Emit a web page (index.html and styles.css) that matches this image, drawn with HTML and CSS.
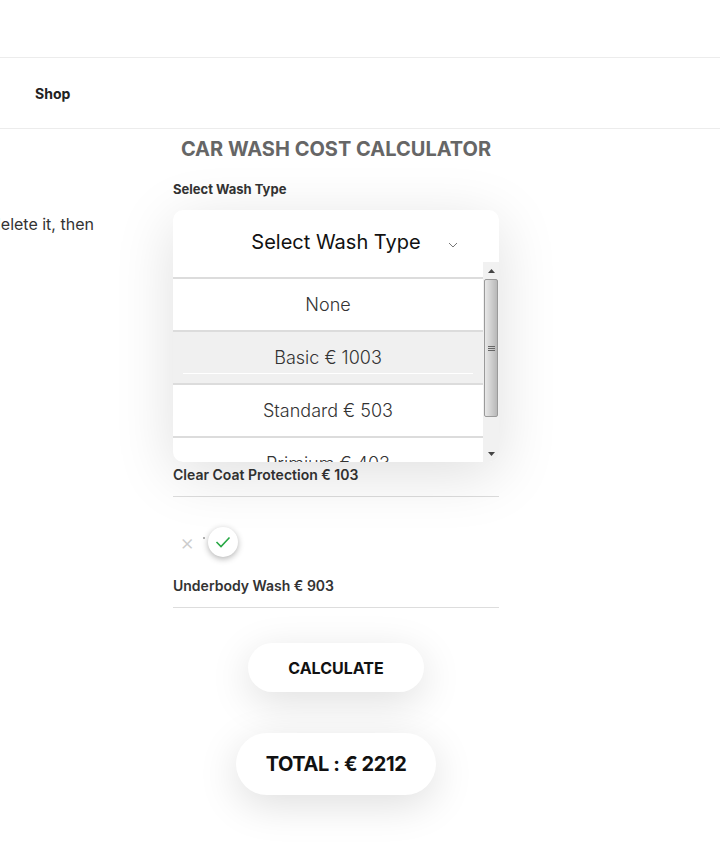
FILE: index.html
```html
<!DOCTYPE html>
<html>
<head>
<meta charset="utf-8">
<link rel="stylesheet" href="styles.css">
</head>
<body>
<div class="topbar"></div>
<nav class="nav"><a class="nav-link">Shop</a></nav>
<div class="main">
  <aside class="side">
    <p class="side-text">delete it, then</p>
  </aside>
  <section class="calc">
    <h1 class="title">CAR WASH COST CALCULATOR</h1>
    <div class="field-label">Select Wash Type</div>
    <div class="dropdown">
      <div class="dd-head">
        <span class="dd-value">Select Wash Type</span>
        <svg class="chev" width="10" height="6" viewBox="0 0 10 6"><polyline points="1,1 5,5 9,1" fill="none" stroke="#777" stroke-width="1"/></svg>
      </div>
      <div class="dd-list">
        <div class="dd-options">
          <div class="opt-partial"></div>
          <div class="opt">None</div>
          <div class="opt opt-hover">Basic € 1003</div>
          <div class="opt">Standard € 503</div>
          <div class="opt">Primium € 403</div>
        </div>
        <div class="scrollbar">
          <div class="sb-btn"><svg width="7" height="4" viewBox="0 0 7 4"><polygon points="0,4 3.5,0 7,4" fill="#444"/></svg></div>
          <div class="sb-thumb"><div class="grip"></div><div class="grip"></div><div class="grip"></div></div>
          <div class="sb-track"></div>
          <div class="sb-btn"><svg width="7" height="4" viewBox="0 0 7 4"><polygon points="0,0 7,0 3.5,4" fill="#444"/></svg></div>
        </div>
      </div>
    </div>
    <div class="addon addon-first">Clear Coat Protection € 103</div>
    <div class="toggle">
      <span class="t-x">×</span>
      <span class="t-dot"></span>
      <span class="knob"><svg width="16" height="12" viewBox="0 0 16 12"><polyline points="1.5,6 6,10.5 14.5,1.5" fill="none" stroke="#27a844" stroke-width="1.6"/></svg></span>
    </div>
    <div class="addon">Underbody Wash € 903</div>
    <div class="actions">
      <button class="btn">CALCULATE</button>
      <div class="total">TOTAL : € 2212</div>
    </div>
  </section>
</div>
</body>
</html>
```
FILE: styles.css
```css
* { box-sizing: border-box; }
html, body { margin: 0; padding: 0; background: #fff; }
body {
  font-family: Inter, Roboto, "Liberation Sans", sans-serif;
  color: #222;
  width: 720px;
  height: 860px;
  overflow: hidden;
}
.topbar {
  height: 58px;
  border-bottom: 1px solid #ececec;
}
.nav {
  height: 71px;
  border-bottom: 1px solid #ececec;
  display: flex;
  align-items: center;
  padding-left: 35px;
}
.nav-link {
  font-size: 14px;
  font-weight: 700;
  color: #222;
}
.main {
  display: flex;
}
.side {
  width: 173px;
  flex: none;
}
.side-text {
  margin: 85px 0 0 -9px;
  font-size: 16px;
  color: #333;
  white-space: nowrap;
}
.calc {
  width: 326px;
  flex: none;
}
.title {
  margin: 8px -20px 0;
  text-align: center;
  font-size: 20px;
  line-height: 24px;
  font-weight: 700;
  color: #666;
}
.field-label {
  margin-top: 20px;
  font-size: 13px;
  font-weight: 700;
  color: #333;
  line-height: 16px;
}
.dropdown {
  margin-top: 13px;
  background: #fff;
  border-radius: 10px;
  box-shadow: 0 12px 60px rgba(0,0,0,0.13);
  overflow: hidden;
  position: relative;
  z-index: 2;
}
.dd-head {
  height: 52px;
  display: flex;
  align-items: center;
  justify-content: center;
  position: relative;
}
.dd-value {
  font-size: 20px;
  color: #111;
  margin-top: 12px;
}
.chev {
  position: absolute;
  left: 275px;
  top: 32px;
}
.dd-list {
  height: 200px;
  display: flex;
  overflow: hidden;
}
.dd-options {
  flex: 1;
  overflow: hidden;
}
.opt-partial {
  height: 15px;
}
.opt {
  height: 53px;
  border-top: 2px solid #dcdcdc;
  display: flex;
  align-items: center;
  justify-content: center;
  font-size: 18px;
  color: #333;
  font-weight: 300;
}
.opt-hover {
  background: #f0f0f0;
  position: relative;
}
.opt-hover::after {
  content: "";
  position: absolute;
  left: 10px;
  right: 10px;
  bottom: 9px;
  height: 1px;
  background: #fff;
}
.scrollbar {
  width: 16px;
  flex: none;
  background: #f1f1f1;
  display: flex;
  flex-direction: column;
}
.sb-btn {
  height: 17px;
  display: flex;
  align-items: center;
  justify-content: center;
}
.sb-thumb {
  height: 138px;
  margin: 0 1px;
  border: 1px solid #9a9a9a;
  border-radius: 2px;
  background: linear-gradient(to right, #e8e8e8, #d0d0d0 50%, #b8b8b8);
  display: flex;
  flex-direction: column;
  align-items: center;
  justify-content: center;
  gap: 1px;
}
.grip {
  width: 7px;
  height: 1px;
  background: #666;
}
.sb-track { flex: 1; }
.addon {
  font-size: 14px;
  font-weight: 600;
  color: #333;
  line-height: 18px;
  padding-bottom: 12px;
  border-bottom: 1px solid #ddd;
}
.addon-first {
  margin-top: 4px;
}
.toggle {
  height: 80px;
  display: flex;
  align-items: flex-start;
  padding: 30px 0 0 7px;
}
.t-x {
  font-size: 22px;
  color: #ccc;
  font-weight: 300;
  line-height: 30px;
}
.t-dot {
  width: 2px;
  height: 2px;
  background: #999;
  border-radius: 50%;
  margin: 10px 0 0 9px;
}
.knob {
  width: 30px;
  height: 30px;
  border-radius: 50%;
  background: #fff;
  box-shadow: 0 2px 6px rgba(0,0,0,0.3);
  display: flex;
  align-items: center;
  justify-content: center;
  margin-left: 3px;
}
.actions {
  display: flex;
  flex-direction: column;
  align-items: center;
}
.btn {
  margin-top: 35px;
  width: 176px;
  height: 49px;
  border: none;
  border-radius: 25px;
  background: #fff;
  box-shadow: 0 10px 40px rgba(0,0,0,0.13);
  font-family: inherit;
  font-size: 16px;
  font-weight: 700;
  color: #111;
}
.total {
  margin-top: 41px;
  width: 200px;
  height: 62px;
  border-radius: 31px;
  background: #fff;
  box-shadow: 0 10px 40px rgba(0,0,0,0.13);
  display: flex;
  align-items: center;
  justify-content: center;
  font-size: 20px;
  letter-spacing: -0.4px;
  font-weight: 700;
  color: #111;
}
```
